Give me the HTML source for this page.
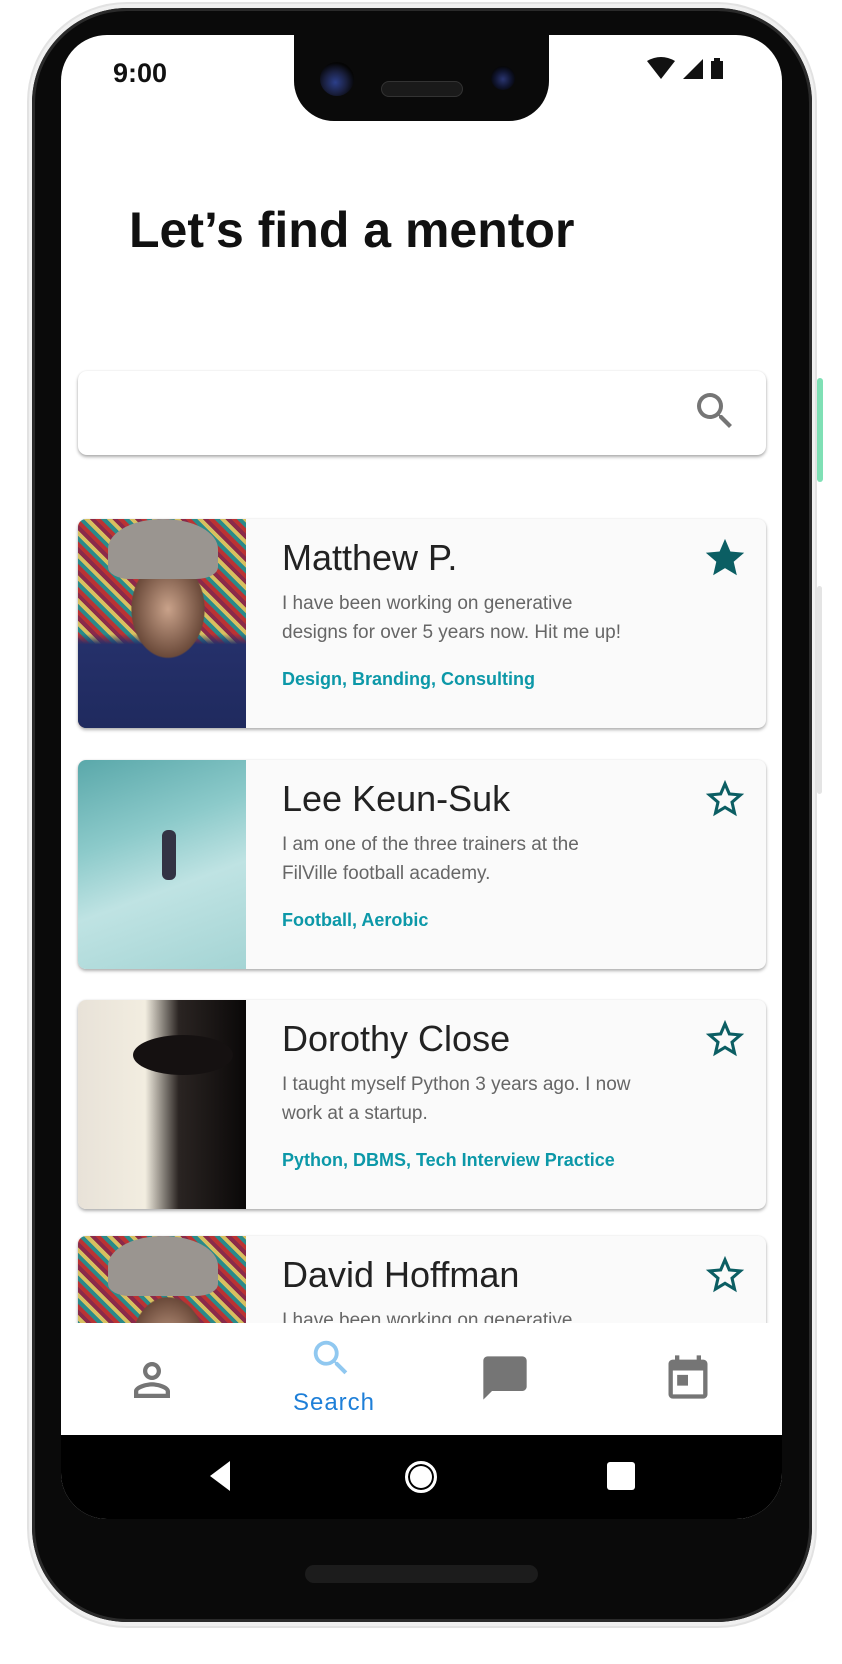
<!DOCTYPE html>
<html><head><meta charset="utf-8"><style>
*{margin:0;padding:0;box-sizing:border-box}
body{width:842px;height:1664px;background:#fff;position:relative;overflow:hidden;font-family:"Liberation Sans",sans-serif}
.abs{position:absolute}
.shadow{left:40px;top:1560px;width:770px;height:70px;border-radius:50%;background:radial-gradient(ellipse at center,rgba(0,0,0,.13),rgba(0,0,0,0) 70%)}
.outer{left:27px;top:2px;width:790px;height:1626px;border-radius:100px;background:#f0f0f0;border:2px solid #e2e2e2}
.body{left:32px;top:8px;width:780px;height:1614px;border-radius:95px;background:#0a0a0a;box-shadow:inset 0 0 0 3px #2a2a2a}
.screen{left:61px;top:35px;width:721px;height:1484px;border-radius:46px;background:#fff;overflow:hidden}
.notch{left:294px;top:30px;width:255px;height:91px;background:#0a0a0a;border-radius:0 0 40px 40px}
.card{position:absolute;left:17px;width:688px;height:209px;background:#fafafa;border-radius:8px;box-shadow:0 2px 3px rgba(0,0,0,.3),0 0 2px rgba(0,0,0,.08);overflow:hidden}
.ph{position:absolute;left:0;top:0;width:168px;height:100%}
.name{position:absolute;left:204px;top:18px;font-size:36px;color:#222}
.desc{position:absolute;left:204px;top:70px;font-size:19px;line-height:29px;color:#666;width:355px}
.tags{position:absolute;left:204px;top:150px;font-size:18px;color:#0c98a8;font-weight:bold}
.star{position:absolute;left:624px;top:16px;width:46px;height:46px}
</style></head><body>
<div class="abs shadow"></div>
<div class="abs outer"></div>
<div class="abs" style="left:817px;top:378px;width:6px;height:104px;background:#7fe0b5;border-radius:3px"></div>
<div class="abs" style="left:817px;top:586px;width:5px;height:208px;background:#e4e4e4;border-radius:3px"></div>
<div class="abs body"></div>
<div class="abs screen">
  <div class="abs" style="left:52px;top:23px;font-size:27px;color:#111;font-weight:bold">9:00</div>
  <svg class="abs" style="left:584px;top:22px" width="90" height="26" viewBox="0 0 90 26">
    <path d="M2 4 Q16 -4 30 4 L16 22 Z" fill="#111"/>
    <path d="M38 22 L58 2 L58 22 Z" fill="#111"/>
    <rect x="66" y="4" width="12" height="18" fill="#111"/><rect x="69" y="1" width="6" height="4" fill="#111"/>
  </svg>
  <div class="abs" style="left:68px;top:166px;font-size:50px;font-weight:bold;color:#111">Let’s find a mentor</div>
  <div class="abs" style="left:17px;top:336px;width:688px;height:84px;background:#fff;border-radius:9px;box-shadow:0 2px 3px rgba(0,0,0,.32),0 0 2px rgba(0,0,0,.08)"></div>
  <svg class="abs" style="left:630px;top:352px" width="48" height="48" viewBox="0 0 24 24"><path fill="#757575" d="M15.5 14h-.79l-.28-.27A6.47 6.47 0 0016 9.5 6.5 6.5 0 109.5 16c1.61 0 3.09-.59 4.23-1.57l.27.28v.79l5 4.99L20.49 19l-4.99-5zm-6 0C7.01 14 5 11.990 5 9.5S7.01 5 9.5 5 14 7.01 14 9.5 11.99 14 9.5 14z"/></svg>

  <div class="card" style="top:484px">
    <div class="ph" style="background:radial-gradient(ellipse 60px 80px at 90px 90px,#c9a28a 0,#6b4a3a 60%,transparent 62%),linear-gradient(180deg,transparent 55%,#25306a 60%,#1f2a5e 100%),repeating-linear-gradient(45deg,#b33 0 4px,#2a8a8a 4px 8px,#d8c060 8px 12px,#8a2a4a 12px 16px)"></div>
    <div class="abs" style="left:30px;top:0;width:110px;height:60px;border-radius:50% 50% 20% 20%;background:#9a9590"></div>
    <div class="name">Matthew P.</div>
    <div class="desc">I have been working on generative designs for over 5 years now. Hit me up!</div>
    <div class="tags">Design, Branding, Consulting</div>
    <svg class="star" viewBox="0 0 24 24"><path fill="#0b5e63" d="M12 17.27L18.18 21l-1.64-7.03L22 9.240l-7.19-.61L12 2 9.19 8.63 2 9.24l5.46 4.73L5.82 21z"/></svg>
  </div>
  <div class="card" style="top:725px">
    <div class="ph" style="background:linear-gradient(160deg,#5aa8aa 0,#8ccaca 35%,#bfe3e3 60%,#a4d4d4 100%)"></div>
    <div class="abs" style="left:84px;top:70px;width:14px;height:50px;background:#334;border-radius:6px"></div>
    <div class="name">Lee Keun-Suk</div>
    <div class="desc">I am one of the three trainers at the FilVille football academy.</div>
    <div class="tags">Football, Aerobic</div>
    <svg class="star" viewBox="0 0 24 24"><path fill="#0b5e63" d="M22 9.24l-7.19-.62L12 2 9.19 8.63 2 9.24l5.46 4.73L5.82 21 12 17.27 18.18 21l-1.63-7.03L22 9.24zM12 15.4l-3.76 2.27 1-4.28-3.32-2.88 4.38-.38L12 6.1l1.71 4.04 4.38.38-3.32 2.88 1 4.28L12 15.4z"/></svg>
  </div>
  <div class="card" style="top:965px">
    <div class="ph" style="background:linear-gradient(90deg,#e8e2d8 0,#f2ede0 40%,#2a2422 60%,#0a0808 100%)"></div>
    <div class="abs" style="left:55px;top:35px;width:100px;height:40px;border-radius:50%;background:#151111"></div>
    <div class="name">Dorothy Close</div>
    <div class="desc">I taught myself Python 3 years ago. I now work at a startup.</div>
    <div class="tags">Python, DBMS, Tech Interview Practice</div>
    <svg class="star" viewBox="0 0 24 24"><path fill="#0b5e63" d="M22 9.24l-7.19-.62L12 2 9.19 8.63 2 9.24l5.46 4.73L5.82 21 12 17.27 18.18 21l-1.63-7.03L22 9.24zM12 15.4l-3.76 2.27 1-4.28-3.32-2.88 4.38-.38L12 6.1l1.71 4.04 4.38.38-3.32 2.88 1 4.28L12 15.4z"/></svg>
  </div>
  <div class="card" style="top:1201px">
    <div class="ph" style="background:radial-gradient(ellipse 60px 80px at 90px 110px,#c9a28a 0,#6b4a3a 60%,transparent 62%),repeating-linear-gradient(45deg,#b33 0 4px,#2a8a8a 4px 8px,#d8c060 8px 12px,#8a2a4a 12px 16px)"></div>
    <div class="abs" style="left:30px;top:0;width:110px;height:60px;border-radius:50% 50% 20% 20%;background:#9a9590"></div>
    <div class="name">David Hoffman</div>
    <div class="desc">I have been working on generative designs for over 5 years now.</div>
    <svg class="star" viewBox="0 0 24 24"><path fill="#0b5e63" d="M22 9.24l-7.19-.62L12 2 9.19 8.63 2 9.24l5.46 4.73L5.82 21 12 17.27 18.18 21l-1.63-7.03L22 9.24zM12 15.4l-3.76 2.27 1-4.28-3.32-2.88 4.38-.38L12 6.1l1.71 4.04 4.38.38-3.32 2.88 1 4.28L12 15.4z"/></svg>
  </div>

  <div class="abs" style="left:0;top:1288px;width:721px;height:112px;background:#fff"></div>
  <svg class="abs" style="left:64px;top:1318px" width="54" height="54" viewBox="0 0 24 24"><path fill="#757575" d="M12 5.9c1.16 0 2.1.94 2.1 2.1s-.94 2.1-2.1 2.1S9.9 9.16 9.9 8s.94-2.1 2.1-2.1m0 9c2.97 0 6.1 1.46 6.1 2.1v1.1H5.9V17c0-.64 3.13-2.1 6.1-2.1M12 4C9.790 4 8 5.79 8 8s1.79 4 4 4 4-1.79 4-4-1.79-4-4-4zm0 9c-2.67 0-8 1.34-8 4v3h16v-3c0-2.66-5.33-4-8-4z"/></svg>
  <svg class="abs" style="left:247px;top:1300px" width="46" height="46" viewBox="0 0 24 24"><path fill="#90c8f0" d="M15.5 14h-.79l-.28-.27A6.47 6.47 0 0016 9.5 6.5 6.5 0 109.5 16c1.61 0 3.09-.59 4.23-1.57l.27.28v.79l5 4.99L20.49 19l-4.99-5zm-6 0C7.01 14 5 11.99 5 9.5S7.01 5 9.5 5 14 7.01 14 9.5 11.99 14 9.5 14z"/></svg>
  <div class="abs" style="left:230px;top:1354px;width:86px;text-align:center;font-size:24px;color:#1e7fd8;letter-spacing:1px">Search</div>
  <svg class="abs" style="left:418px;top:1317px" width="52" height="52" viewBox="0 0 24 24"><path fill="#757575" d="M20 2H4c-1.1 0-2 .9-2 2v18l4-4h14c1.1 0 2-.9 2-2V4c0-1.1-.9-2-2-2z"/></svg>
  <svg class="abs" style="left:601px;top:1316px" width="52" height="52" viewBox="0 0 24 24"><path fill="#757575" d="M19 4h-1V2h-2v2H8V2H6v2H5c-1.11 0-2 .9-2 2v14a2 2 0 002 2h14c1.1 0 2-.9 2-2V6c0-1.1-.9-2-2-2zm0 16H5V9h14v11zM7 11h5v5H7z"/></svg>

  <div class="abs" style="left:0;top:1400px;width:721px;height:84px;background:#000"></div>
  <svg class="abs" style="left:145px;top:1424px" width="30" height="34" viewBox="0 0 30 34"><path d="M24 2 L4 17 L24 32 Z" fill="#fff"/></svg>
  <div class="abs" style="left:344px;top:1426px;width:32px;height:32px;border-radius:50%;background:#fff;border:3px solid #fff;box-shadow:inset 0 0 0 2px #000"></div>
  <div class="abs" style="left:546px;top:1427px;width:28px;height:28px;border-radius:3px;background:#fff"></div>
</div>
<div class="abs notch"></div>
<div class="abs" style="left:320px;top:62px;width:34px;height:34px;border-radius:50%;background:radial-gradient(circle at 45% 60%,#2c3f8a 0,#1a2040 40%,#050505 70%)"></div>
<div class="abs" style="left:491px;top:66px;width:24px;height:24px;border-radius:50%;background:radial-gradient(circle at 50% 55%,#2a3570 0,#101530 45%,#050505 75%)"></div>
<div class="abs" style="left:381px;top:81px;width:82px;height:16px;border-radius:8px;background:#1a1a1a;border:1px solid #333"></div>
<div class="abs" style="left:305px;top:1565px;width:233px;height:18px;border-radius:9px;background:#1c1c1c"></div>
</body></html>
